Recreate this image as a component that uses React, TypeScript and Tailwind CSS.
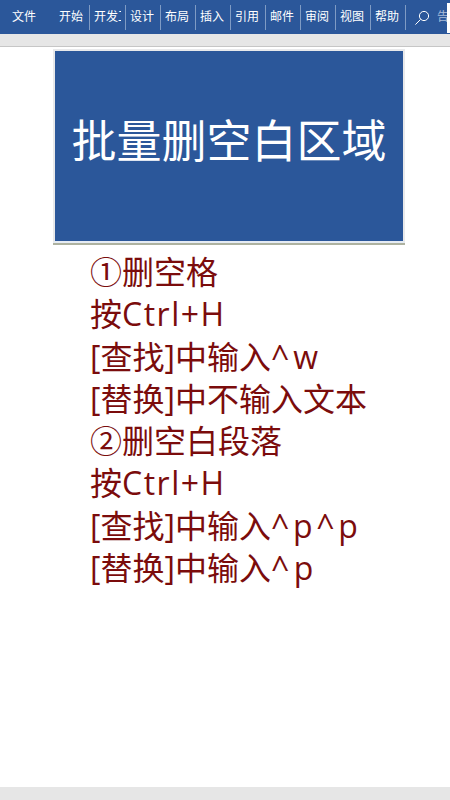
import React from 'react';

const tabs = ['开始', '开发工', '设计', '布局', '插入', '引用', '邮件', '审阅', '视图', '帮助'];

const lines: [string, string, string][] = [
  ['①删空格', '', ''],
  ['按', 'Ctrl+H', 'tracking-[1.5px]'],
  ['[查找]中输入', '^w', 'tracking-[4px]'],
  ['[替换]中不输入文本', '', ''],
  ['②删空白段落', '', ''],
  ['按', 'Ctrl+H', 'tracking-[1.5px]'],
  ['[查找]中输入', '^p^p', 'tracking-[3.7px]'],
  ['[替换]中输入', '^p', 'tracking-[4.5px]'],
];

export default function App() {
  return (
    <div className="h-[800px] w-[450px] overflow-hidden bg-white flex flex-col font-['Open_Sans','Noto_Sans_CJK_SC',sans-serif]">
      {/* Ribbon tabs */}
      <header className="h-[34px] shrink-0 bg-[#2b579a] flex items-center text-white text-xs overflow-hidden">
        <span className="w-[59px] shrink-0 pl-3">文件</span>
        {tabs.map((tab, i) => (
          <div
            key={tab}
            className={`${i === 0 ? 'w-[31px]' : i === 1 ? 'w-[36px] pl-1' : 'w-[35px] pl-1'} shrink-0 h-[25px] flex items-center`}
          >
            <span className={`${i === 1 ? 'w-[26.5px] mr-[4.5px]' : 'w-[30px]'} shrink-0 overflow-hidden whitespace-nowrap`}>{tab}</span>
            <span className="h-[25px] w-px shrink-0 bg-[#7f9bc4]" />
          </div>
        ))}
        <svg width="16" height="16" viewBox="0 0 16 16" fill="none" stroke="#ffffff" strokeWidth="1" className="ml-[8px] shrink-0">
          <circle cx="10" cy="7" r="4.6" />
          <path d="M6.6 10.4 1.4 15.6" />
        </svg>
        <span className="ml-[7px] w-[10px] shrink-0 overflow-hidden whitespace-nowrap text-[#a9bcd9]">告诉我</span>
        <span className="h-[30px] w-[3px] shrink-0 self-end mb-px bg-white" />
      </header>
      <div className="h-[13px] shrink-0 bg-[#e6e6e6] border-b border-[#c6c6c6]" />

      {/* Slide page */}
      <main className="flex-1 pt-[2px]">
        <div className="ml-[53px] w-[352px] h-[194px] pb-[12px] bg-[#2b579a] border-2 border-[#e8e9eb] border-b-[#e6ecf4] shadow-[0_2px_0_#aeb2a0] flex items-center justify-center">
          <h1 className="text-white text-[45px] leading-none font-normal whitespace-nowrap">批量删空白区域</h1>
        </div>
        <div className="mt-[8px] ml-[90px] text-[#7b0c0c] text-[32px] leading-[42.3px] whitespace-nowrap">
          {lines.map(([text, latin, spacing], i) => (
            <p key={i}>
              {text}
              {latin && <span className={spacing}>{latin}</span>}
            </p>
          ))}
        </div>
      </main>

      <footer className="h-[13px] shrink-0 bg-[#e6e6e6]" />
    </div>
  );
}
